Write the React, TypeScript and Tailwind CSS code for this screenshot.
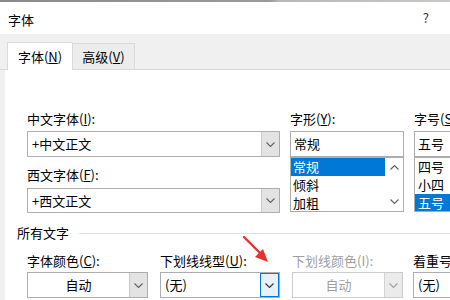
import React from "react";

const Chevron = ({ up = false, color = "#606060" }: { up?: boolean; color?: string }) => (
  <svg width="9" height="5" viewBox="0 0 9 5">
    <polyline
      points={up ? "0.5,4.5 4.5,0.5 8.5,4.5" : "0.5,0.5 4.5,4.5 8.5,0.5"}
      fill="none"
      stroke={color}
      strokeWidth="1.1"
    />
  </svg>
);

const Label = ({ children, className = "" }: { children: React.ReactNode; className?: string }) => (
  <div className={`h-[14px] leading-[14px] text-[13px] whitespace-nowrap ${className}`}>{children}</div>
);

export default function App() {
  return (
    <div className="w-[450px] h-[300px] overflow-hidden bg-white text-black font-['Noto_Sans_CJK_SC',sans-serif] text-[13px] flex flex-col">
      {/* top strip */}
      <div className="h-[2px] shrink-0 bg-[linear-gradient(90deg,#8a8a8a_0%,#9a9a9a_60%,#b8b8b8_62%,#c8c8c8_100%)]" />
      {/* title */}
      <div className="h-[32px] shrink-0 flex items-center justify-between pl-[8px] pr-[21px]">
        <span className="text-[13px] leading-[14px] mt-[4px]">字体</span>
        <span className="text-[13px] leading-[14px] text-[#333]">?</span>
      </div>
      {/* tab band */}
      <div className="h-[36px] bg-[#f0f0f0] border-b border-[#dadada] flex items-end pl-[7px] shrink-0">
        <div className="w-[66px] h-[28px] -mb-px bg-white border border-b-0 border-[#dadada] flex items-center justify-center text-[13px]">
          字体(<span className="underline">N</span>)
        </div>
        <div className="w-[62px] h-[26px] bg-[#ececec] border border-l-0 border-b-0 border-[#dadada] flex items-center justify-center text-[13px]">
          高级(<span className="underline">V</span>)
        </div>
      </div>
      {/* content */}
      <div className="flex flex-1 min-h-0">
        <div className="w-[5px] shrink-0 bg-[#f0f0f0]" />
        <div className="flex-1 min-w-0 flex flex-col pt-[42px] relative overflow-hidden">
          {/* row 1 */}
          <div className="flex">
            {/* col A */}
            <div className="ml-[22px] w-[253px] shrink-0 flex flex-col">
              <Label>
                中文字体(<span className="underline">I</span>):
              </Label>
              <div className="mt-[5px] h-[26px] border border-[#adadad] flex items-center">
                <span className="flex-1 pl-[4px]">+中文正文</span>
                <div className="w-[18px] h-[24px] bg-[#e3e3e3] border-l border-[#c8c8c8] flex items-center justify-center">
                  <Chevron />
                </div>
              </div>
              <Label className="mt-[11px]">
                西文字体(<span className="underline">F</span>):
              </Label>
              <div className="mt-[6px] h-[25px] border border-[#adadad] flex items-center">
                <span className="flex-1 pl-[4px]">+西文正文</span>
                <div className="w-[18px] h-[23px] bg-[#e3e3e3] border-l border-[#c8c8c8] flex items-center justify-center">
                  <Chevron />
                </div>
              </div>
            </div>
            {/* col B */}
            <div className="ml-[10px] w-[114px] shrink-0 flex flex-col">
              <Label>
                字形(<span className="underline">Y</span>):
              </Label>
              <div className="mt-[5px] h-[26px] border border-[#adadad] flex items-center pl-[3px]">常规</div>
              <div className="h-[55px] border border-[#adadad] flex">
                <div className="flex-1 flex flex-col">
                  <div className="h-[18px] bg-[#0078d7] text-white leading-[18px] pl-[2px]">常规</div>
                  <div className="h-[18px] leading-[18px] pl-[2px]">倾斜</div>
                  <div className="h-[17px] leading-[17px] pl-[2px]">加粗</div>
                </div>
                <div className="w-[18px] flex flex-col items-center justify-between py-[7px]">
                  <Chevron up />
                  <Chevron />
                </div>
              </div>
            </div>
            {/* col C */}
            <div className="ml-[10px] flex-1 min-w-0 flex flex-col">
              <Label>
                字号(<span className="underline">S</span>
              </Label>
              <div className="mt-[5px] h-[26px] border border-r-0 border-[#adadad] flex items-center pl-[3px]">五号</div>
              <div className="h-[55px] border border-r-0 border-[#adadad] flex flex-col">
                <div className="h-[18px] leading-[18px] pl-[3px]">四号</div>
                <div className="h-[18px] leading-[18px] pl-[3px]">小四</div>
                <div className="h-[17px] leading-[17px] pl-[3px] bg-[#0078d7] text-white">五号</div>
              </div>
            </div>
          </div>
          {/* group label */}
          <div className="mt-[13px] flex items-center ml-[12px]">
            <span className="leading-[14px]">所有文字</span>
            <div className="flex-1 h-px bg-[#dcdcdc] ml-[10px]" />
          </div>
          {/* row 3 */}
          <div className="flex mt-[14px]">
            <div className="ml-[22px] w-[121px] shrink-0 flex flex-col">
              <Label>
                字体颜色(<span className="underline">C</span>):
              </Label>
              <div className="mt-[4px] h-[26px] border border-[#adadad] flex items-center">
                <span className="flex-1 text-center">自动</span>
                <div className="w-[18px] h-[24px] bg-[#e3e3e3] border-l border-[#c8c8c8] flex items-center justify-center">
                  <Chevron />
                </div>
              </div>
            </div>
            <div className="ml-[12px] w-[120px] shrink-0 flex flex-col">
              <Label>
                下划线线型(<span className="underline">U</span>):
              </Label>
              <div className="mt-[4px] h-[26px] border border-[#adadad] flex items-center">
                <span className="flex-1 pl-[4px]">(无)</span>
                <div className="w-[19px] h-[24px] bg-[#e5f1fb] border border-[#0078d7] flex items-center justify-center">
                  <Chevron color="#333" />
                </div>
              </div>
            </div>
            <div className="ml-[12px] w-[111px] shrink-0 flex flex-col">
              <Label className="text-[#a0a0a0]">下划线颜色(I):</Label>
              <div className="mt-[4px] h-[26px] border border-[#cccccc] flex items-center">
                <span className="flex-1 text-center text-[#a0a0a0]">自动</span>
                <div className="w-[18px] h-[24px] bg-[#ebebeb] border-l border-[#d4d4d4] flex items-center justify-center">
                  <Chevron color="#a0a0a0" />
                </div>
              </div>
            </div>
            <div className="ml-[10px] flex-1 min-w-0 flex flex-col overflow-hidden">
              <Label>着重号</Label>
              <div className="mt-[4px] h-[26px] border border-r-0 border-[#adadad] flex items-center pl-[4px]">(无)</div>
            </div>
          </div>
          {/* red arrow annotation */}
          <svg className="absolute left-[236px] top-[165px]" width="32" height="30" viewBox="0 0 32 30">
            <line x1="3" y1="2" x2="22" y2="21" stroke="#e8322d" strokeWidth="2.4" strokeLinecap="round" />
            <polygon points="27,27 14,22 22,14" fill="#e8322d" />
          </svg>
        </div>
      </div>
    </div>
  );
}
